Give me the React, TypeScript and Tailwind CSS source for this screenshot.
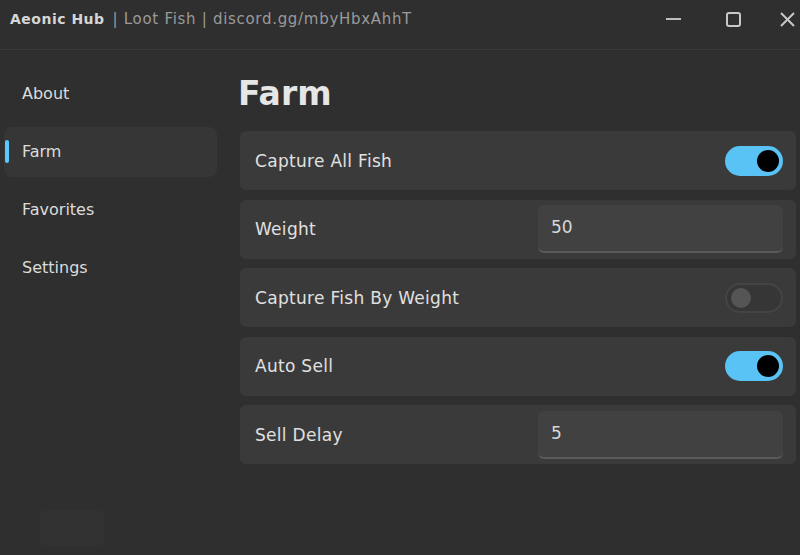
import React from "react";

const font = { fontFamily: '"DejaVu Sans", "Noto Sans", sans-serif' };

function Toggle({ on }: { on: boolean }) {
  return on ? (
    <div className="w-[58px] h-[30px] rounded-full bg-[#5ac3f5] flex items-center justify-end pr-[4px]">
      <div className="w-[22px] h-[22px] rounded-full bg-black" />
    </div>
  ) : (
    <div className="w-[58px] h-[30px] rounded-full border-2 border-[#444] bg-[#363636] flex items-center pl-[4px]">
      <div className="w-[20px] h-[20px] rounded-full bg-[#555]" />
    </div>
  );
}

function Input({ value }: { value: string }) {
  return (
    <div className="w-[245px] h-[48px] rounded-[6px] bg-[#414141] border-b-2 border-[#5a5a5a] flex items-center px-[13px] text-[17px] text-[#d8d8d8]">
      {value}
    </div>
  );
}

function Row({ label, children }: { label: string; children: React.ReactNode }) {
  return (
    <div className="h-[59px] rounded-[6px] bg-[#3a3a3a] flex items-center justify-between pl-[15px] pr-[13px]">
      <span className="text-[17px] tracking-[0.3px] text-[#e0e0e0] pt-[2px]">{label}</span>
      {children}
    </div>
  );
}

export default function App() {
  return (
    <div className="w-[800px] h-[555px] bg-[#2f2f2f] flex flex-col overflow-hidden relative" style={font}>
      <div className="h-[50px] border-b border-[#393939] flex items-start pt-[9px] pl-[10px] pr-[5px] shrink-0">
        <div className="h-[20px] flex items-center">
          <span className="text-[14px] font-bold tracking-[0.5px] text-[#d6d6d6]">Aeonic Hub</span>
          <span className="text-[15px] tracking-[0.7px] text-[#9a9a9a] ml-[8px]">| Loot Fish | discord.gg/mbyHbxAhhT</span>
        </div>
        <div className="ml-auto flex items-center h-[20px]">
          <div className="w-[15px] h-[2px] bg-[#bdbdbd]" />
          <div className="ml-[45px] w-[15px] h-[15px] border-2 border-[#c8c8c8] rounded-[3px]" />
          <svg className="ml-[39px]" width="15" height="15" viewBox="0 0 15 15">
            <path d="M1 1L14 14M14 1L1 14" stroke="#c8c8c8" strokeWidth="2" />
          </svg>
        </div>
      </div>
      <div className="flex flex-1">
        <div className="w-[220px] pl-[4px] pr-[3px] pt-[19px] flex flex-col gap-[8px]">
          {["About", "Farm", "Favorites", "Settings"].map((t) => (
            <div
              key={t}
              className={`h-[50px] rounded-[8px] flex items-center pl-[18px] relative text-[16px] text-[#dcdcdc] ${
                t === "Farm" ? "bg-[#363636]" : ""
              }`}
            >
              {t === "Farm" && (
                <div className="absolute left-[1px] top-[13px] w-[4px] h-[23px] rounded-full bg-[#5ac8fa]" />
              )}
              {t}
            </div>
          ))}
        </div>
        <div className="flex-1 pl-[20px] pr-[4px] pt-[24px]">
          <div className="text-[33px] font-bold text-[#e6e6e6] leading-[40px] ml-[-2px] mb-[17px]">Farm</div>
          <div className="flex flex-col gap-[9.5px]">
            <Row label="Capture All Fish"><Toggle on /></Row>
            <Row label="Weight"><Input value="50" /></Row>
            <Row label="Capture Fish By Weight"><Toggle on={false} /></Row>
            <Row label="Auto Sell"><Toggle on /></Row>
            <Row label="Sell Delay"><Input value="5" /></Row>
          </div>
        </div>
      </div>
      <div className="absolute left-[40px] top-[510px] w-[64px] h-[36px] rounded-[6px] bg-[#323232]" />
    </div>
  );
}
